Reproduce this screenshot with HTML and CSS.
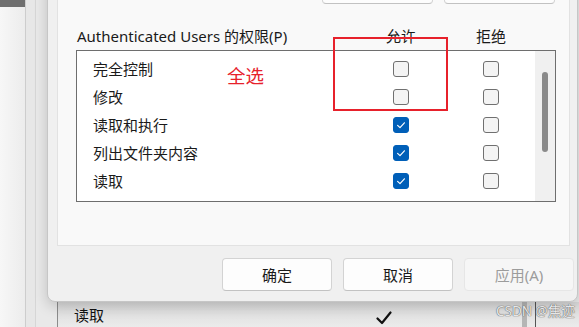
FILE: index.html
```html
<!DOCTYPE html>
<html lang="zh-CN">
<head>
<meta charset="utf-8">
<title>权限</title>
<link rel="stylesheet" href="styles.css">
</head>
<body>
<div class="desktop">
  <div class="bgwin">
    <div class="pane-a"><div class="pane-a-title"></div></div>
    <div class="pane-b"></div>
    <div class="pane-c">
      <div class="pane-c-fill"></div>
      <div class="bg-row">
        <span class="bg-name">读取</span>
        <svg class="bg-check" width="16" height="14" viewBox="0 0 16 14"><polyline points="1.5,7.5 6,12 14.5,1.5" fill="none" stroke="#111" stroke-width="2.2" stroke-linecap="round" stroke-linejoin="round"/></svg>
        <span class="bg-block"></span>
        <span class="bg-line"></span>
      </div>
    </div>
  </div>

  <div class="dialog">
    <div class="panel">
      <div class="top-buttons">
        <div class="btn btn-top"></div>
        <div class="btn btn-top"></div>
      </div>
      <div class="perm-header">
        <span class="perm-title">Authenticated Users 的权限(P)</span>
        <span class="col-head">允许</span>
        <span></span>
        <span class="col-head">拒绝</span>
      </div>
      <div class="perm-list">
        <div class="perm-rows">
          <div class="perm-row"><span class="perm-name">完全控制</span><span class="cb"></span><span></span><span class="cb"></span></div>
          <div class="perm-row"><span class="perm-name">修改</span><span class="cb"></span><span></span><span class="cb"></span></div>
          <div class="perm-row"><span class="perm-name">读取和执行</span><span class="cb cb-on"><svg width="16" height="16" viewBox="0 0 16 16"><polyline points="4.6,8.4 7,10.6 11.4,5.8" fill="none" stroke="#fff" stroke-width="1.2" stroke-linecap="round" stroke-linejoin="round"/></svg></span><span></span><span class="cb"></span></div>
          <div class="perm-row"><span class="perm-name">列出文件夹内容</span><span class="cb cb-on"><svg width="16" height="16" viewBox="0 0 16 16"><polyline points="4.6,8.4 7,10.6 11.4,5.8" fill="none" stroke="#fff" stroke-width="1.2" stroke-linecap="round" stroke-linejoin="round"/></svg></span><span></span><span class="cb"></span></div>
          <div class="perm-row"><span class="perm-name">读取</span><span class="cb cb-on"><svg width="16" height="16" viewBox="0 0 16 16"><polyline points="4.6,8.4 7,10.6 11.4,5.8" fill="none" stroke="#fff" stroke-width="1.2" stroke-linecap="round" stroke-linejoin="round"/></svg></span><span></span><span class="cb"></span></div>
          <div class="perm-row"><span class="perm-name"></span><span class="cb cb-on"></span><span></span><span class="cb"></span></div>
        </div>
        <div class="scrollbar"><div class="thumb"></div></div>
      </div>
    </div>
    <div class="actions">
      <button class="btn btn-act">确定</button>
      <button class="btn btn-act">取消</button>
      <button class="btn btn-act btn-disabled">应用(A)</button>
    </div>
  </div>

  <div class="annot-box"></div>
  <div class="annot-text">全选</div>
  <div class="watermark">CSDN @焦迹</div>
</div>
</body>
</html>
```
FILE: styles.css
```css
* { box-sizing: border-box; }
html, body { margin: 0; padding: 0; }
body {
  width: 579px;
  height: 327px;
  overflow: hidden;
  font-family: "Noto Sans", "Noto Sans CJK SC", sans-serif;
  color: #1a1a1a;
  background: #e6e6e6;
}
.desktop {
  position: relative;
  width: 579px;
  height: 327px;
  overflow: hidden;
}

/* background window */
.bgwin {
  display: flex;
  height: 327px;
}
.pane-a {
  width: 26px;
  border-right: 1px solid #cdcdcd;
  background: linear-gradient(to right, #f7f7f7, #ececec);
}
.pane-a-title {
  height: 7px;
  background: #6f6f6f;
}
.pane-b {
  width: 10px;
  border-right: 1px solid #d6d6d6;
  background: #e7e7e7;
}
.pane-c {
  flex: 1;
  display: flex;
  flex-direction: column;
  background: #e9e9e9;
}
.pane-c-fill { flex: 1; }
.bg-row {
  height: 25px;
  margin-left: 21px;
  border-left: 1px solid #8c8c8c;
  background: linear-gradient(to bottom, #d9d9d9, #ebebeb);
  display: flex;
  align-items: center;
  padding-left: 16px;
  font-size: 15px;
  color: #111;
}
.bg-name { width: 302px; line-height: 25px; padding-top: 2px; }
.bg-check { margin-top: 6px; }
.bg-block {
  width: 5px;
  height: 25px;
  margin-left: 130px;
  background: #b5b5b5;
}
.bg-line {
  width: 1px;
  height: 25px;
  margin-left: 8px;
  background: #555;
}

/* dialog */
.dialog {
  position: absolute;
  left: 47px;
  top: -40px;
  width: 531px;
  border: 1px solid #c6c6c6;
  border-radius: 8px;
  background: #f0f0f0;
  box-shadow: 0 4px 14px rgba(0, 0, 0, 0.18);
}
.panel {
  margin: 0 7px 0 9px;
  width: 513px;
  border: 1px solid #e2e2e2;
  border-top: none;
  background: #f9f9f9;
  padding: 10px 13px 43px 18px;
}
.top-buttons {
  display: flex;
  justify-content: flex-end;
  gap: 11px;
  margin-right: 1px;
}
.btn {
  font-family: inherit;
  background: #fdfdfd;
  border: 1px solid #d3d3d3;
  border-bottom-color: #c2c2c2;
  border-radius: 4px;
  color: #1a1a1a;
}
.btn-top { width: 111px; height: 33px; }

.perm-header {
  display: grid;
  grid-template-columns: 301px 48px 42px 48px;
  margin-top: 22px;
  height: 20px;
  line-height: 20px;
  font-size: 15px;
}
.perm-title { padding-left: 1px; white-space: nowrap; }
.col-head { text-align: center; }

.perm-list {
  margin-top: 4px;
  width: 480px;
  height: 152px;
  border: 1px solid #6e6e6e;
  background: #fff;
  display: flex;
}
.perm-rows {
  flex: 1;
  overflow: hidden;
  padding-top: 4px;
}
.perm-row {
  display: grid;
  grid-template-columns: 316px 16px 74px 16px;
  align-items: center;
  height: 28px;
}
.perm-name {
  padding-left: 16px;
  font-size: 15px;
  line-height: 28px;
  white-space: nowrap;
}
.cb {
  width: 16px;
  height: 16px;
  border: 1px solid #707070;
  border-radius: 3px;
  background: #f4f4f4;
  display: block;
}
.cb-on {
  border-color: #005fb8;
  background: #005fb8;
}
.cb-on svg {
  display: block;
  margin: -1px;
}
.scrollbar {
  width: 20px;
  background: #f0f0f0;
}
.thumb {
  margin: 21px 0 0 7px;
  width: 6px;
  height: 80px;
  border-radius: 3px;
  background: #8a8a8a;
}

.actions {
  display: flex;
  justify-content: flex-end;
  gap: 11px;
  padding: 12px 3px 10px 0;
}
.btn-act {
  width: 110px;
  height: 33px;
  font-size: 15px;
  padding: 0;
}
.btn-disabled {
  background: #f6f6f6;
  border-color: #e6e6e6;
  color: #9c9c9c;
}

/* annotations */
.annot-box {
  position: absolute;
  left: 333px;
  top: 37px;
  width: 115px;
  height: 74px;
  border: 2px solid #e7212b;
}
.annot-text {
  position: absolute;
  left: 227px;
  top: 64px;
  font-size: 18.5px;
  line-height: 24px;
  color: #e7212b;
}
.watermark {
  position: absolute;
  left: 496px;
  top: 302px;
  font-size: 13.5px;
  line-height: 18px;
  color: rgba(250, 250, 250, 0.9);
  text-shadow: 0 0 1px #5a5a5a, 0 0 1px #5a5a5a;
  white-space: nowrap;
}
```
